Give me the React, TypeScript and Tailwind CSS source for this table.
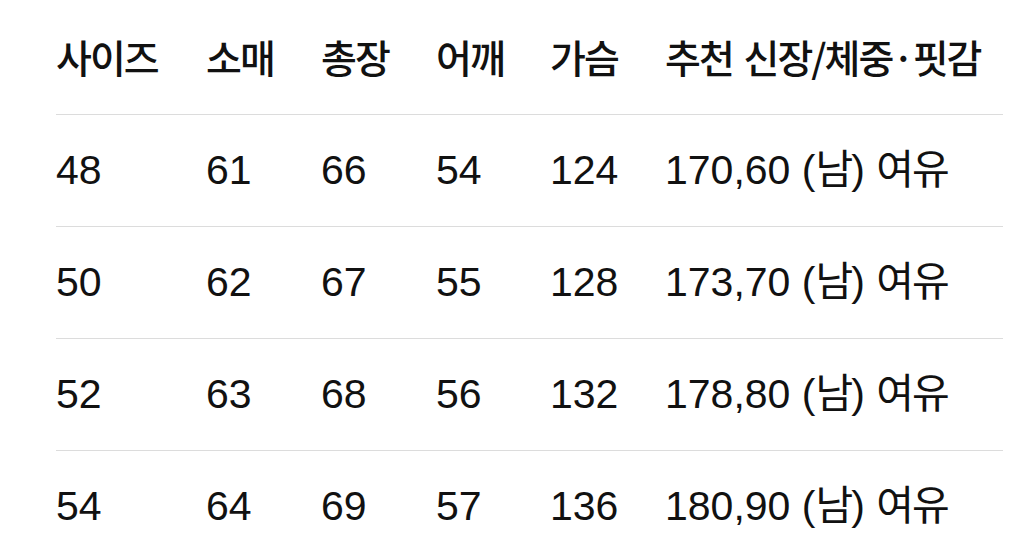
const header = ["사이즈", "소매", "총장", "어깨", "가슴", "추천 신장/체중·핏감"]

const rows = [
  ["48", "61", "66", "54", "124", "170,60"],
  ["50", "62", "67", "55", "128", "173,70"],
  ["52", "63", "68", "56", "132", "178,80"],
  ["54", "64", "69", "57", "136", "180,90"],
]

const cols = "grid grid-cols-[150px_115px_115px_114px_115px_1fr] items-center h-[112px]"

const App = () => {
  return (
    <div className="w-[1024px] h-[549px] overflow-hidden bg-white text-[#111] pt-[3px] pl-[56px] pr-[21px] font-['Liberation_Sans','Noto_Sans_CJK_KR',sans-serif]">
      <div className={`${cols} border-b border-[#dcdcdc] pb-[4px]`}>
        {header.map((h) => (
          <p key={h} className="text-[39px] font-medium tracking-[-2px] whitespace-nowrap font-['Noto_Sans_CJK_KR',sans-serif] [word-spacing:4px]">
            {h}
          </p>
        ))}
      </div>
      {rows.map((row, i) => (
        <div key={i} className={`${cols} ${i < rows.length - 1 ? "border-b border-[#dcdcdc]" : ""}`}>
          {row.map((c, j) => (
            <p key={j} className="text-[41px] whitespace-nowrap">
              {c}
              {j === 5 && (
                <>
                  {" "}(<span className="tracking-[-2px]">남</span>) <span className="tracking-[-2px]">여유</span>
                </>
              )}
            </p>
          ))}
        </div>
      ))}
    </div>
  )
}

export default App
